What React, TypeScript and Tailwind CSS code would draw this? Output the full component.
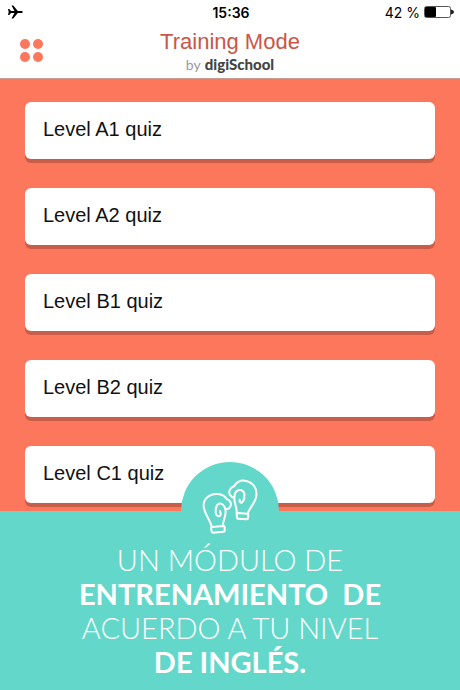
const levels = ["A1", "A2", "B1", "B2", "C1"];

function StatusBar() {
  return (
    <div className="grid h-6 grid-cols-3 items-center pr-1.5 pl-2 font-['Inter','Liberation_Sans',sans-serif] text-[14px] text-black">
      <svg width="15" height="14" viewBox="0 0 15 14" role="img" aria-label="Airplane mode">
        <path
          d="M0 4h1.300L3 6h3.500L3.500 0.500h1.800L9.800 6h3.400c.9 0 1.500.4 1.500 1s-.6 1-1.500 1H9.800l-4.500 5.500H3.500L6.500 8H3l-1.700 2H0l.7-3z"
          fill="currentColor"
        />
      </svg>
      <span className="text-center font-semibold">15:36</span>
      <span className="flex items-center justify-end gap-1 whitespace-nowrap">
        42 %
        <svg width="30" height="12" viewBox="0 0 30 12" role="img" aria-label="Battery">
          <rect x="0.5" y="0.5" width="26" height="11" rx="2" fill="none" stroke="#555" />
          <rect x="1" y="1" width="11" height="10" rx="1" fill="#000" />
          <path d="M27 3.500c2 .4 3 1.300 3 2.500s-1 2.100-3 2.500z" fill="#222" />
        </svg>
      </span>
    </div>
  );
}

function Header() {
  return (
    <header className="grid h-[55px] grid-cols-[60px_1fr_60px] items-start border-b border-[#c59a90]">
      <button type="button" aria-label="Menu" className="ml-5 grid w-6 grid-cols-2 gap-x-0.5 gap-y-[3px] pt-[15px]">
        <span className="size-[10px] rounded-full bg-[#fd775c]" />
        <span className="size-[10px] rounded-full bg-[#fd775c]" />
        <span className="size-[10px] rounded-full bg-[#fd775c]" />
        <span className="size-[10px] rounded-full bg-[#fd775c]" />
      </button>
      <div className="pt-1 text-center">
        <h1 className="font-['Liberation_Sans',sans-serif] text-[22px] leading-7 text-[#cb5548]">Training Mode</h1>
        <p className="flex items-baseline justify-center gap-1 font-['Lato',sans-serif] text-[14px] leading-4 text-[#999]">
          by
          <strong className="text-[15px] font-black text-[#444]">digiSchool</strong>
        </p>
      </div>
    </header>
  );
}

function Gloves() {
  return (
    <svg
      width="60"
      height="60"
      viewBox="0 0 180 180"
      fill="none"
      stroke="#fff"
      strokeWidth="6"
      strokeLinecap="round"
      strokeLinejoin="round"
      aria-hidden="true"
    >
      <path d="M35 148C29 124 8 106 11 81C14 60 34 49 54 51C66 52 75 58 80 66C92 69 96 82 90 90C87 96 81 97 76 96C81 116 68 130 69 146" />
      <path d="M76 96C73 82 62 77 55 81C46 87 47 97 47 106C47 117 57 121 61 115C64 110 61 107 60 102" />
      <path d="M36 150L71 147Q74 147 74 150L74 161Q74 164 71 164L39 167Q35 167 35 163L33 153Q33 150 36 150Z" />
      <path d="M110 108C112 92 102 80 103 62C91 60 84 48 90 38C93 31 99 29 103 27C108 15 122 9 135 11C160 15 172 35 169 56C167 78 148 92 144 108" />
      <path d="M103 62C103 43 113 38 122 39C137 42 135 64 129 73C125 80 117 77 119 68" />
      <path d="M113 108L142 110Q145 110 145 113L144 124Q144 127 141 127L114 125Q111 125 111 122L110 111Q110 108 113 108Z" />
    </svg>
  );
}

export default function App() {
  return (
    <div className="flex min-h-screen flex-col bg-[#fd775c]">
      <div className="bg-white">
        <StatusBar />
        <Header />
      </div>
      <main className="px-[25px] pt-[23px] pb-2">
        <ul className="flex flex-col gap-[29px]">
          {levels.map((level) => (
            <li key={level}>
              <button
                type="button"
                className="block h-[57px] w-full rounded-md bg-white px-[18px] pb-[3px] text-left font-['Liberation_Sans',sans-serif] text-[20px] text-[#111] shadow-[0_4px_0_#c85d49]"
              >
                Level {level} quiz
              </button>
            </li>
          ))}
        </ul>
      </main>
      <section className="relative grow bg-[#63d8ca] pt-8 text-center">
        <div className="absolute -top-[49px] left-1/2 flex size-[98px] -translate-x-1/2 justify-center rounded-full bg-[#63d8ca] pt-[15px]">
          <Gloves />
        </div>
        <p className="relative font-['Lato',sans-serif] text-[29px] leading-[34px] font-light text-white">
          UN MÓDULO DE
          <br />
          <strong className="font-bold">ENTRENAMIENTO&nbsp; DE</strong>
          <br />
          ACUERDO A TU NIVEL
          <br />
          <strong className="font-bold">DE INGLÉS.</strong>
        </p>
      </section>
    </div>
  );
}
